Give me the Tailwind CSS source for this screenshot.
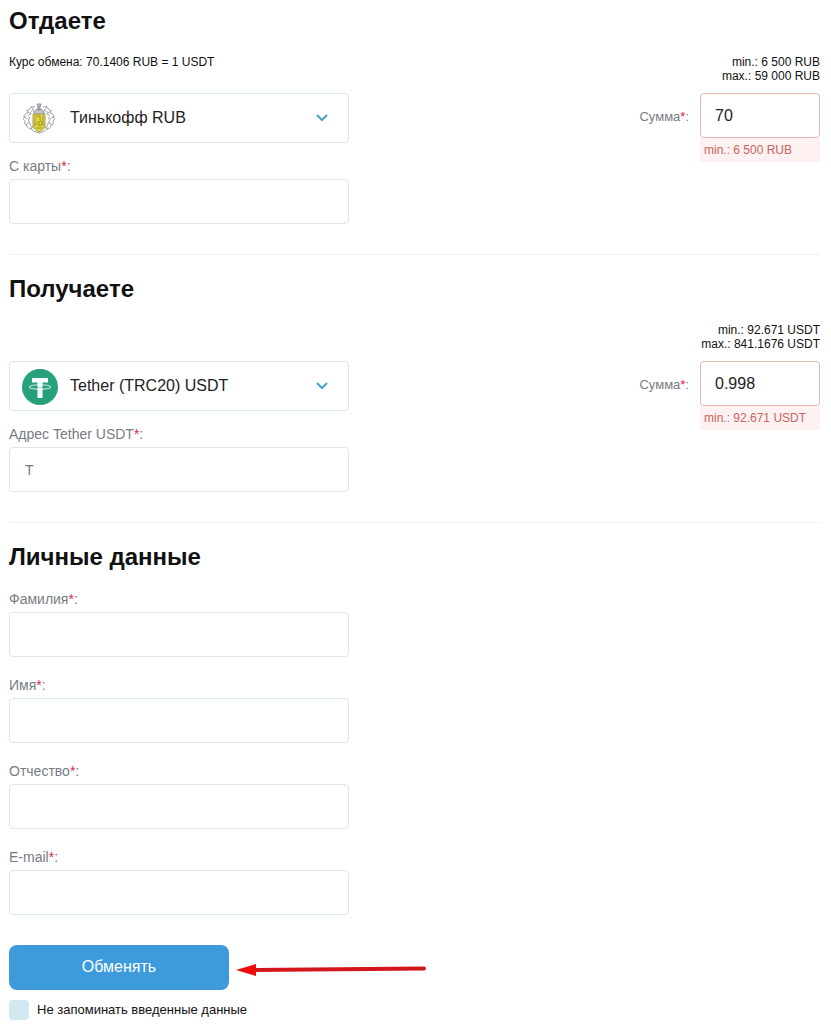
<!DOCTYPE html>
<html lang="ru">
  <head>
    <meta charset="UTF-8" />
    <meta name="viewport" content="width=device-width, initial-scale=1" />
    <title>Обмен Тинькофф RUB на Tether USDT</title>
    <script src="https://cdn.jsdelivr.net/npm/@tailwindcss/browser@4"></script>
  </head>
  <body class="bg-white font-['Liberation_Sans',Arial,sans-serif] text-[#111]">
    <form class="pt-[7px] pr-[11px] pb-2 pl-[9px]">
      <!-- Give -->
      <section class="border-b border-[#eef2f5] pb-[30px]">
        <h2 class="text-2xl leading-7 font-bold">Отдаете</h2>
        <div class="mt-5 flex justify-between text-xs leading-[14px]">
          <p>Курс обмена: 70.1406 RUB = 1 USDT</p>
          <p class="text-right">min.: 6 500 RUB<br />max.: 59 000 RUB</p>
        </div>
        <div class="mt-2.5 flex items-start justify-between">
          <div class="w-[340px]">
            <div class="relative">
              <select
                aria-label="Отдаете"
                class="h-[50px] w-full appearance-none rounded border border-[#dce6ee] bg-white pr-10 pl-[60px] text-base text-[#222] outline-none"
              >
                <option>Тинькофф RUB</option>
              </select>
              <svg class="pointer-events-none absolute top-2 left-[13px] size-9" viewBox="0 0 36 36" fill="none">
                <!-- mantling -->
                <g stroke="#a3a5aa" stroke-width="1">
                  <path d="M13 6c-3-1-5 0-5 2-2 0-3 2-2 4-3 0-4 2-3 4-2 1-2 3 0 4-1 3 0 4 2 4 0 3 2 4 4 3 1 3 4 4 8 5 4-1 7-2 8-5 2 1 4 0 4-3 2 0 3-1 2-4 2-1 2-3 0-4 1-2 0-4-3-4 1-2 0-4-2-4 0-2-2-3-5-2" />
                  <path d="M12 10c-2-1-4 1-3 3-3 0-3 3-1 4-2 1-2 4 0 5 0 3 1 4 3 4M22 10c2-1 4 1 3 3 3 0 3 3 1 4 2 1 2 4 0 5 0 3-1 4-3 4" />
                  <path d="M1 15l5 3M4 9l5 4M9 5l3 5M33 15l-5 3M30 9l-5 4M25 5l-3 5M3 24l5-3M31 24l-5-3M8 29l3-4M26 29l-3-4" />
                </g>
                <!-- crown and helmet -->
                <path d="M15 3h4l-1 3h-2zM16 6h2v3h-2zM12 11l3-3h4l3 3v2H12z" fill="#c3c5ca" stroke="#92959c" />
                <!-- shield -->
                <path d="M11 13h12v11c0 3-2 5-6 7-4-2-6-4-6-7z" fill="#e0d63c" stroke="#a19d62" />
                <path d="M13 16v9l4-5v5M13 15h5v4l3 5v-9M17 24h4M14 27h6" stroke="#9c963b" />
              </svg>
              <svg class="pointer-events-none absolute top-[21px] right-[21px] h-2 w-3" viewBox="0 0 12 8" fill="none" stroke="#4ba3c7" stroke-width="2">
                <path d="M1 1l5 5 5-5" />
              </svg>
            </div>
            <label for="card" class="mt-[15px] mb-[5px] block text-sm leading-4 text-[#777c84]">С карты<span class="text-[#e0243f]">*</span>:</label>
            <input id="card" type="text" class="block h-[45px] w-full rounded border border-[#dce6ee] px-[15px] text-sm outline-none" />
          </div>
          <div class="flex items-start gap-[11px]">
            <label for="sum-give" class="mt-4 text-[13px] leading-4 text-[#777c84]">Сумма<span class="text-[#e0243f]">*</span>:</label>
            <div class="w-[120px]">
              <input id="sum-give" type="text" value="70" class="block h-[45px] w-full rounded border border-[#e2b8b0] px-[14px] text-base text-[#222] outline-none" />
              <p class="bg-[#fdf1f1] px-1 text-xs leading-6 text-[#c9645c]">min.: 6 500 RUB</p>
            </div>
          </div>
        </div>
      </section>

      <!-- Get -->
      <section class="border-b border-[#eef2f5] pt-5 pb-[30px]">
        <h2 class="text-2xl leading-7 font-bold">Получаете</h2>
        <div class="mt-5 flex justify-end text-xs leading-[14px]">
          <p class="text-right">min.: 92.671 USDT<br />max.: 841.1676 USDT</p>
        </div>
        <div class="mt-2.5 flex items-start justify-between">
          <div class="w-[340px]">
            <div class="relative">
              <select
                aria-label="Получаете"
                class="h-[50px] w-full appearance-none rounded border border-[#dce6ee] bg-white pr-10 pl-[60px] text-base text-[#222] outline-none"
              >
                <option>Tether (TRC20) USDT</option>
              </select>
              <svg class="pointer-events-none absolute top-2 left-[13px] size-9" viewBox="0 0 36 36">
                <circle cx="18" cy="18" r="18" fill="#26a17b" />
                <path d="M10 9h16v4.500h-5.500V29h-5V13.500H10z" fill="#fff" />
                <ellipse cx="18" cy="18" rx="11" ry="2.200" fill="none" stroke="#fff" stroke-opacity=".8" />
                <path d="M15.500 18.500h5" stroke="#8fd0bb" />
              </svg>
              <svg class="pointer-events-none absolute top-[21px] right-[21px] h-2 w-3" viewBox="0 0 12 8" fill="none" stroke="#4ba3c7" stroke-width="2">
                <path d="M1 1l5 5 5-5" />
              </svg>
            </div>
            <label for="address" class="mt-[15px] mb-[5px] block text-sm leading-4 text-[#777c84]">Адрес Tether USDT<span class="text-[#e0243f]">*</span>:</label>
            <input id="address" type="text" placeholder="T" class="block h-[45px] w-full rounded border border-[#dce6ee] px-[15px] text-sm outline-none placeholder:text-[#777]" />
          </div>
          <div class="flex items-start gap-[11px]">
            <label for="sum-get" class="mt-4 text-[13px] leading-4 text-[#777c84]">Сумма<span class="text-[#e0243f]">*</span>:</label>
            <div class="w-[120px]">
              <input id="sum-get" type="text" value="0.998" class="block h-[45px] w-full rounded border border-[#e2b8b0] px-[14px] text-base text-[#222] outline-none" />
              <p class="bg-[#fdf1f1] px-1 text-xs leading-6 text-[#c9645c]">min.: 92.671 USDT</p>
            </div>
          </div>
        </div>
      </section>

      <!-- Personal data -->
      <section class="pt-5">
        <h2 class="text-2xl leading-7 font-bold">Личные данные</h2>
        <div class="mt-5 flex w-[340px] flex-col gap-5">
          <div>
            <label for="last-name" class="mb-[5px] block text-sm leading-4 text-[#777c84]">Фамилия<span class="text-[#e0243f]">*</span>:</label>
            <input id="last-name" type="text" class="block h-[45px] w-full rounded border border-[#dce6ee] px-[15px] text-sm outline-none" />
          </div>
          <div>
            <label for="first-name" class="mb-[5px] block text-sm leading-4 text-[#777c84]">Имя<span class="text-[#e0243f]">*</span>:</label>
            <input id="first-name" type="text" class="block h-[45px] w-full rounded border border-[#dce6ee] px-[15px] text-sm outline-none" />
          </div>
          <div>
            <label for="middle-name" class="mb-[5px] block text-sm leading-4 text-[#777c84]">Отчество<span class="text-[#e0243f]">*</span>:</label>
            <input id="middle-name" type="text" class="block h-[45px] w-full rounded border border-[#dce6ee] px-[15px] text-sm outline-none" />
          </div>
          <div>
            <label for="email" class="mb-[5px] block text-sm leading-4 text-[#777c84]">E-mail<span class="text-[#e0243f]">*</span>:</label>
            <input id="email" type="email" class="block h-[45px] w-full rounded border border-[#dce6ee] px-[15px] text-sm outline-none" />
          </div>
        </div>
      </section>

      <div class="mt-[30px] flex items-center gap-[7px]">
        <button type="submit" class="h-[45px] w-[220px] rounded-lg bg-[#3d9bdc] pb-0.5 text-base text-white">Обменять</button>
        <svg class="h-4 w-[190px]" viewBox="0 0 190 16">
          <path d="M18 10L188 8.500" stroke="#d3161c" stroke-width="4" stroke-linecap="round" />
          <path d="M0 10L20 4v12z" fill="#ee0c0c" />
        </svg>
      </div>
      <label class="mt-2.5 flex items-center gap-2 text-[13px] leading-5">
        <input type="checkbox" class="size-5 appearance-none rounded-sm bg-[#d3e8f1]" />
        Не запоминать введенные данные
      </label>
    </form>
  </body>
</html>
